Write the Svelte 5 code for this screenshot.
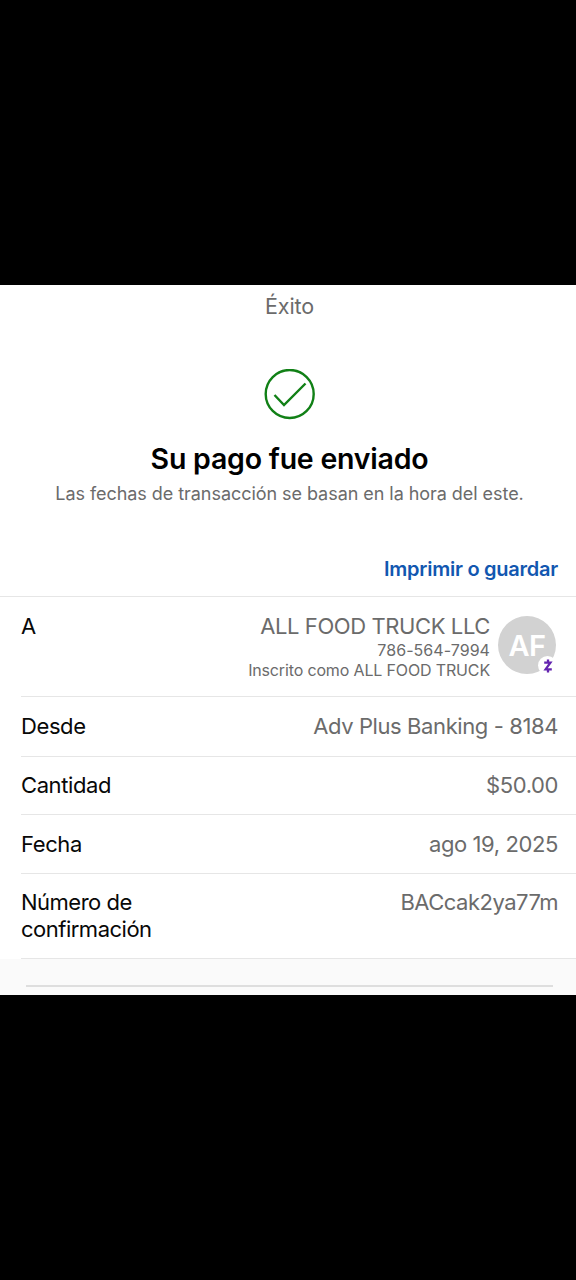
<script>
  const rows = [
    { label: 'Desde', value: 'Adv Plus Banking - 8184', height: 60 },
    { label: 'Cantidad', value: '$50.00', height: 58 },
    { label: 'Fecha', value: 'ago 19, 2025', height: 59 },
  ];
</script>

<main class="screen">
  <section class="sheet">
    <header class="bar">Éxito</header>

    <div class="hero">
      <svg class="check" viewBox="0 0 52 52" width="52" height="52" fill="none" stroke="#118016">
        <circle cx="25.7" cy="25" r="24" stroke-width="2.4" />
        <path d="M10.5 26 L20 36 L41.5 14.5" stroke-width="2.4" />
      </svg>
      <h1>Su pago fue enviado</h1>
      <p>Las fechas de transacción se basan en la hora del este.</p>
    </div>

    <a class="print" href="#print">Imprimir o guardar</a>

    <div class="details">
      <div class="row recipient">
        <span class="label">A</span>
        <div class="payee">
          <span class="name">ALL FOOD TRUCK LLC</span>
          <span class="phone">786-564-7994</span>
          <span class="enrolled">Inscrito como ALL FOOD TRUCK</span>
        </div>
        <div class="avatar">
          AF
          <span class="badge">
            <svg viewBox="0 0 10 14" width="10" height="14" fill="none" stroke="#6425b0" stroke-width="2.3">
              <path d="M1.2 3.6 H7.4 L2.6 10.4 H8.8 M5 0.4 V4 M5 10 V13.6" />
            </svg>
          </span>
        </div>
      </div>
      {#each rows as row}
        <div class="row" style="height: {row.height}px">
          <span class="label">{row.label}</span>
          <span class="value">{row.value}</span>
        </div>
      {/each}
      <div class="row confirmation">
        <span class="label">Número de<br />confirmación</span>
        <span class="value">BACcak2ya77m</span>
      </div>
    </div>

    <footer><hr /></footer>
  </section>
</main>

<style>
  :global(body) {
    margin: 0;
    background: #000;
  }

  .screen {
    box-sizing: border-box;
    height: 1280px;
    padding-top: 285px;
    background: #000;
    font-family: Inter, 'Liberation Sans', sans-serif;
  }

  .sheet {
    display: flex;
    flex-direction: column;
    height: 710px;
    background: #fff;
    color: #080808;
  }

  .bar {
    height: 84px;
    padding-left: 3px;
    line-height: 43px;
    font-size: 21.5px;
    letter-spacing: -0.1px;
    text-align: center;
    color: #6b6b6b;
  }

  .hero {
    display: flex;
    flex-direction: column;
    align-items: center;
    height: 185px;
    padding-left: 3px;
  }

  h1 {
    margin: 20px 0 0;
    font-size: 28.5px;
    font-weight: 600;
    line-height: 36px;
    letter-spacing: -0.22px;
    color: #000;
    white-space: nowrap;
  }

  p {
    margin: 6px 0 0;
    font-size: 18px;
    line-height: 22px;
    letter-spacing: -0.05px;
    color: #6b6b6b;
    white-space: nowrap;
  }

  .print {
    height: 57px;
    box-sizing: border-box;
    padding: 18px 18px 0;
    margin-top: -15px;
    font-size: 20px;
    font-weight: 600;
    letter-spacing: -0.25px;
    text-align: right;
    text-decoration: none;
    color: #1257b0;
  }

  .details {
    border-top: 1px solid #e6e6e6;
    padding-left: 21px;
  }

  .row {
    display: flex;
    justify-content: space-between;
    align-items: center;
    box-sizing: border-box;
    padding-right: 18px;
    border-bottom: 1px solid #e6e6e6;
    font-size: 22px;
    line-height: 27px;
    letter-spacing: -0.4px;
    white-space: nowrap;
  }

  .value,
  .payee {
    color: #6b6b6b;
  }

  .recipient {
    align-items: flex-start;
    height: 100px;
    padding: 16px 20px 0 0;
  }

  .payee {
    display: flex;
    flex-direction: column;
    align-items: flex-end;
    margin: 0 8px 0 auto;
  }

  .phone,
  .enrolled {
    font-size: 16px;
    line-height: 20px;
    letter-spacing: 0.05px;
  }

  .enrolled {
    letter-spacing: -0.15px;
  }

  .avatar {
    position: relative;
    width: 58px;
    height: 58px;
    margin-top: 3px;
    border-radius: 50%;
    background: #d2d2d2;
    color: #fff;
    font-size: 29px;
    font-weight: 600;
    line-height: 60px;
    letter-spacing: -0.6px;
    text-align: center;
  }

  .badge {
    position: absolute;
    right: -1px;
    bottom: -1px;
    display: flex;
    align-items: center;
    justify-content: center;
    width: 19px;
    height: 19px;
    border-radius: 50%;
    background: #fff;
  }

  .confirmation {
    align-items: flex-start;
    height: 85px;
    padding-top: 15px;
  }

  .confirmation .label {
    letter-spacing: -0.5px;
  }

  .confirmation .value {
    letter-spacing: -0.5px;
  }

  footer {
    flex: 1;
    background: #fafafa;
  }

  hr {
    height: 2px;
    margin: 26px 23px 0 26px;
    border: 0;
    background: #dedede;
  }
</style>
